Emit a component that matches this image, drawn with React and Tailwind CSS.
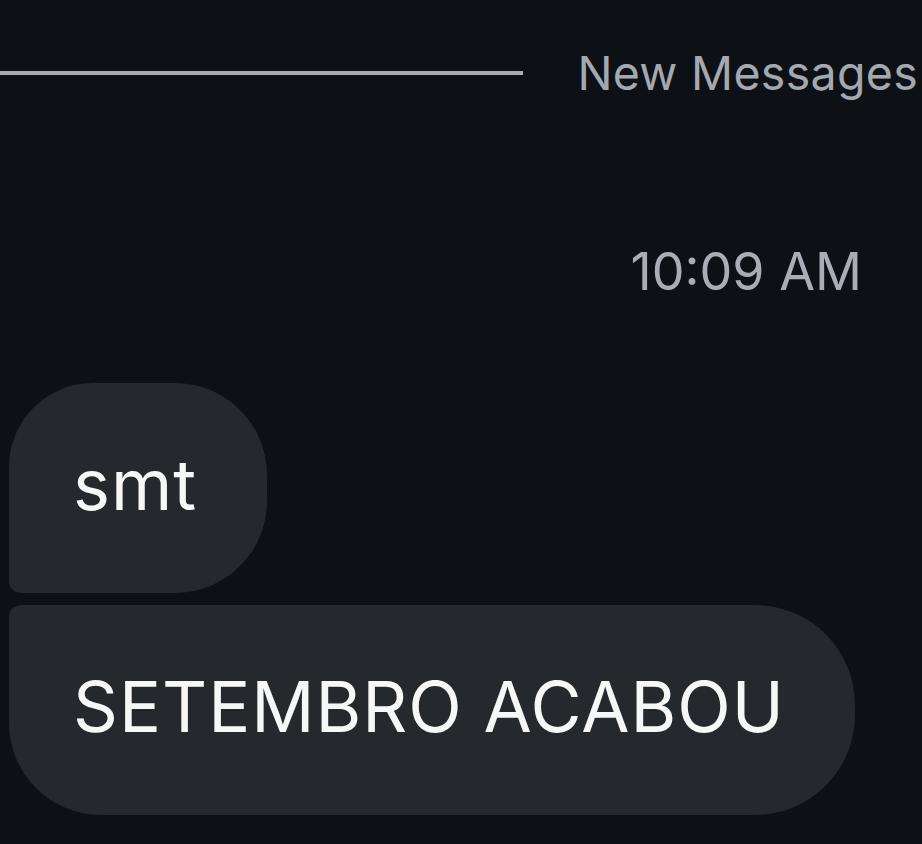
import React from 'react';

const messages = [
  { id: 1, text: 'smt', shape: 'rounded-tl-[84px] rounded-tr-[92px] rounded-br-[92px] rounded-bl-[12px]' },
  { id: 2, text: 'SETEMBRO ACABOU', shape: 'rounded-tl-[12px] rounded-tr-[100px] rounded-br-[100px] rounded-bl-[92px]' },
];

const App = () => {
  return (
    <div
      className="w-[922px] h-[844px] overflow-hidden bg-[#0d1015] flex flex-col"
      style={{ fontFamily: 'Inter, "Liberation Sans", sans-serif' }}
    >
      {/* New messages divider */}
      <div className="flex items-center pt-[48px] pr-[4px]">
        <div className="flex-1 h-[4px] bg-[#a7acb5]" />
        <span className="ml-[54px] text-[46.5px] leading-[50px] text-[#a3a8b1] tracking-[0.3px]">
          New Messages
        </span>
      </div>

      {/* Timestamp */}
      <div className="flex justify-end pr-[60px] mt-[144px]">
        <span className="text-[52px] leading-[60px] text-[#a9aeb6]">10:09 AM</span>
      </div>

      {/* Bubbles */}
      <div className="flex flex-col items-start gap-[12px] pl-[9px] mt-[81px]">
        {messages.map((m) => (
          <div
            key={m.id}
            className={`h-[210px] flex items-center pl-[64px] pr-[70px] pb-[8px] bg-[#25282d] text-[#f7f7f7] text-[70px] tracking-[1px] ${m.shape}`}
          >
            {m.text}
          </div>
        ))}
      </div>
    </div>
  );
};

export default App;
